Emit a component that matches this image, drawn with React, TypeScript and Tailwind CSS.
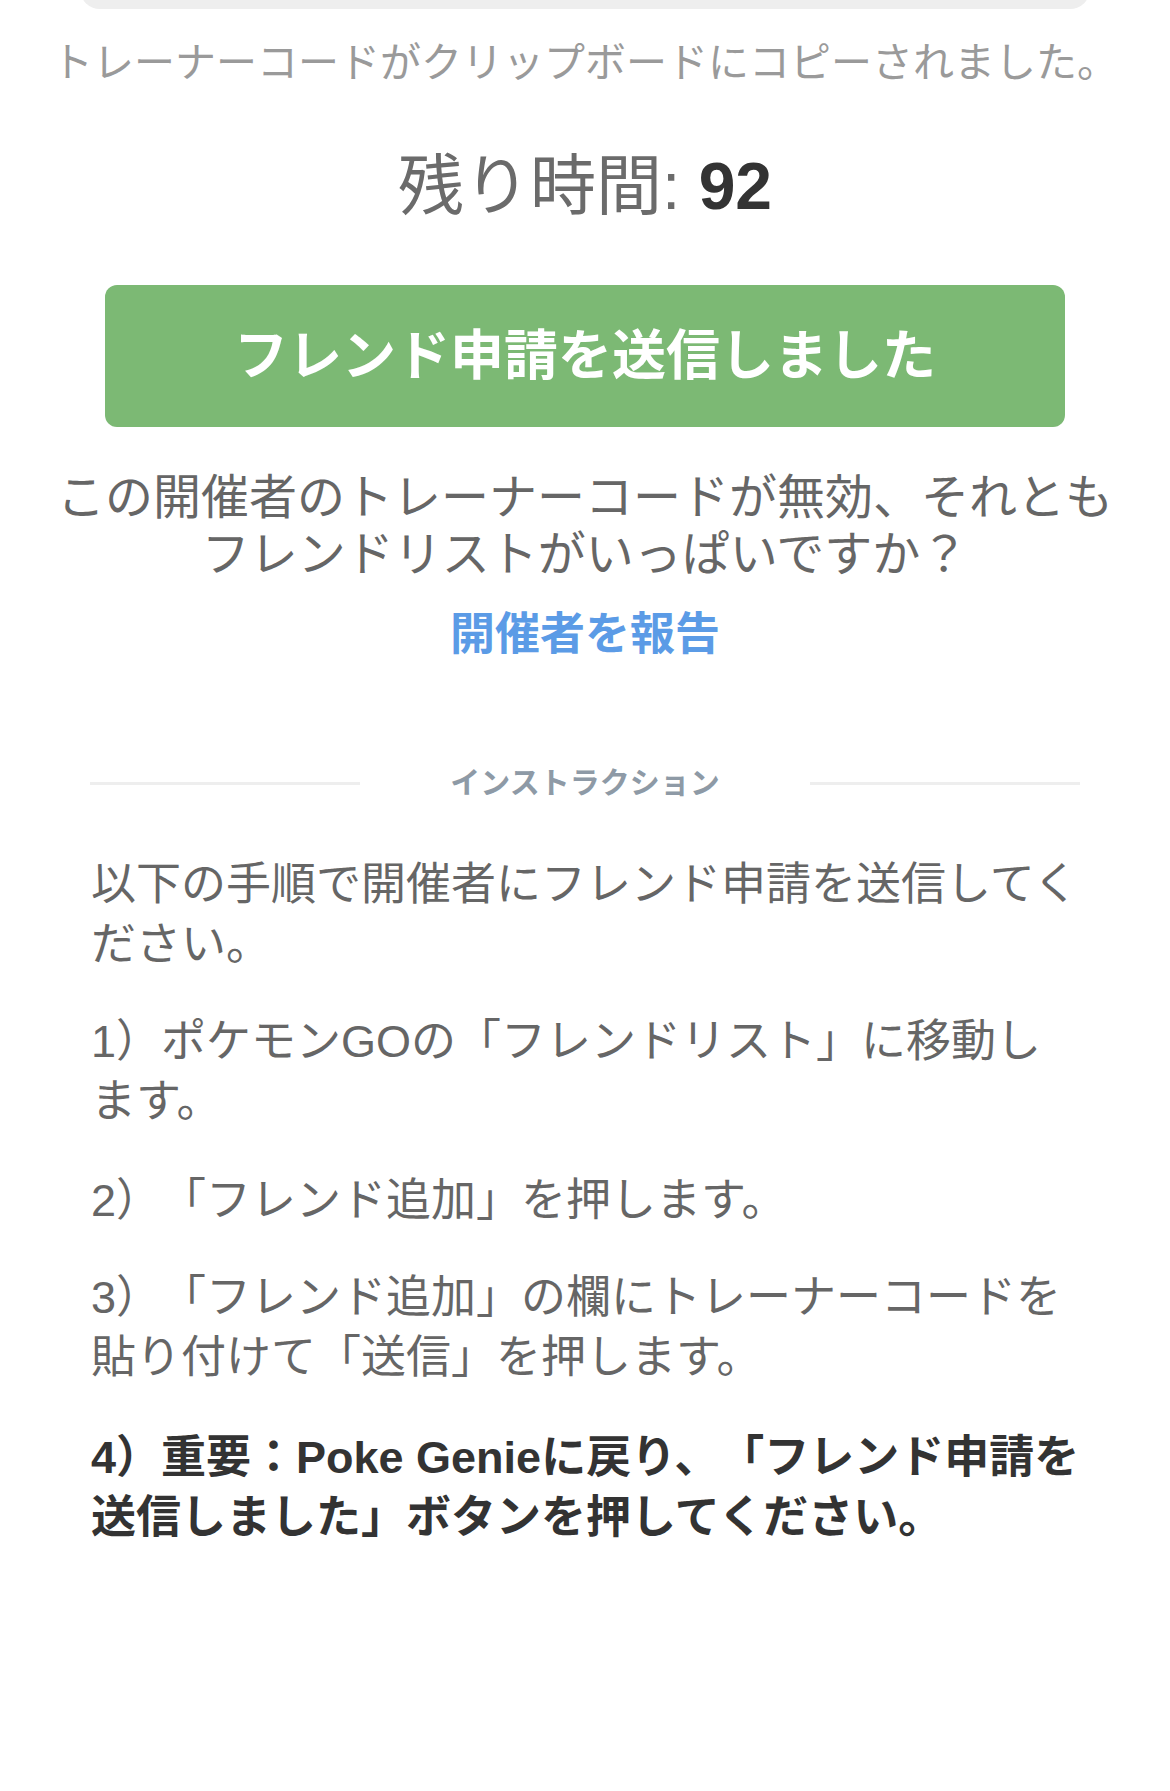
import React from "react";

export default function App() {
  return (
    <div className="w-[1170px] min-h-[1791px] bg-white overflow-hidden [text-spacing-trim:space-all] font-['Liberation_Sans','Noto_Sans_CJK_JP',sans-serif]">
      {/* top card remnant */}
      <div className="mx-[80px] -mt-[31px] h-[40px] rounded-[26px] bg-[#eeeeee]" />

      <p className="mt-[30px] text-center text-[41px] leading-[48px] text-[#9a9a9a] whitespace-nowrap">
        トレーナーコードがクリップボードにコピーされました。
      </p>

      <p className="mt-[60px] text-center text-[66px] leading-[78px] whitespace-nowrap">
        <span className="text-[#6b6b6b]">残り時間: </span>
        <span className="font-bold text-[#333333]">92</span>
      </p>

      <div className="mt-[60px] mx-[105px] h-[142px] rounded-[12px] bg-[#7cb974] flex items-center justify-center">
        <span className="text-white font-bold text-[54px] leading-none whitespace-nowrap">
          フレンド申請を送信しました
        </span>
      </div>

      <p className="mt-[42px] text-center text-[48px] leading-[57px] text-[#666666] whitespace-nowrap">
        この開催者のトレーナーコードが無効、それとも
        <br />
        フレンドリストがいっぱいですか？
      </p>

      <p className="mt-[26px] text-center text-[45px] leading-[52px] font-bold text-[#5b9be6] whitespace-nowrap">
        開催者を報告
      </p>

      <div className="mt-[102px] h-[40px] px-[90px] flex items-center">
        <div className="w-[270px] h-[3px] bg-[#eeeeee]" />
        <div className="flex-1 text-center text-[30px] leading-[40px] font-bold text-[#8e9aa6] whitespace-nowrap">
          インストラクション
        </div>
        <div className="w-[270px] h-[3px] bg-[#eeeeee]" />
      </div>

      <div className="mt-[52px] px-[91px] text-[45px] leading-[60px] text-[#666666] whitespace-nowrap">
        <p>
          以下の手順で開催者にフレンド申請を送信してく
          <br />
          ださい。
        </p>
        <p className="mt-[37px]">
          1）ポケモンGOの「フレンドリスト」に移動し
          <br />
          ます。
        </p>
        <p className="mt-[39px]">2）「フレンド追加」を押します。</p>
        <p className="mt-[37px]">
          3）「フレンド追加」の欄にトレーナーコードを
          <br />
          貼り付けて「送信」を押します。
        </p>
        <p className="mt-[40px] font-bold text-[#333333]">
          4）重要：Poke Genieに戻り、「フレンド申請を
          <br />
          送信しました」ボタンを押してください。
        </p>
      </div>
    </div>
  );
}
